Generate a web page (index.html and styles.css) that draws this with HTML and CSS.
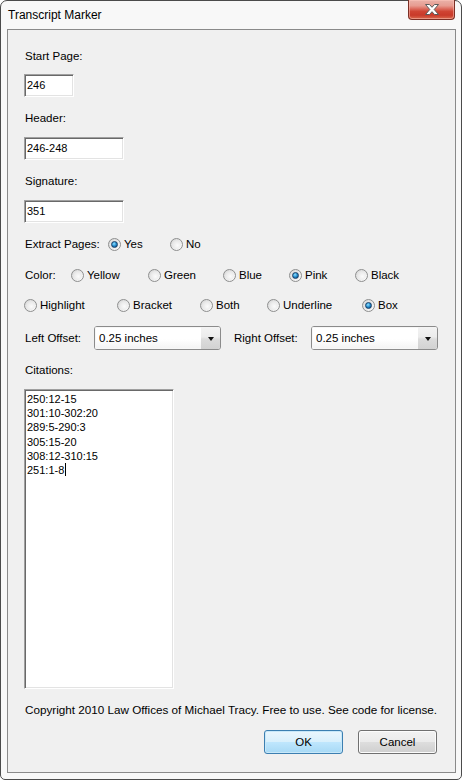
FILE: index.html
```html
<!DOCTYPE html>
<html>
<head>
<meta charset="utf-8">
<link rel="stylesheet" href="styles.css">
</head>
<body>
<div class="window">
  <div class="titlebar">
    <span class="title">Transcript Marker</span>
    <div class="close">
      <svg width="16" height="11" viewBox="0 0 16 11">
        <path d="M1.5 0.5 H5.5 L8 3.3 L10.5 0.5 H14.5 L10.2 5.5 L14.5 10.5 H10.5 L8 7.7 L5.5 10.5 H1.5 L5.8 5.5 Z" fill="#fff" stroke="#5a5a5a" stroke-width="1" stroke-linejoin="round"/>
      </svg>
    </div>
  </div>
  <div class="client">
    <div class="label first">Start Page:</div>
    <div class="tb w50">246</div>
    <div class="label gap13">Header:</div>
    <div class="tb w100">246-248</div>
    <div class="label gap13">Signature:</div>
    <div class="tb w100">351</div>

    <div class="row gap13">
      <span class="rlabel w84">Extract Pages:</span>
      <span class="opt w62"><span class="radio on"></span>Yes</span>
      <span class="opt"><span class="radio"></span>No</span>
    </div>
    <div class="row gap15">
      <span class="rlabel w47">Color:</span>
      <span class="opt w77"><span class="radio"></span>Yellow</span>
      <span class="opt w75"><span class="radio"></span>Green</span>
      <span class="opt w66"><span class="radio"></span>Blue</span>
      <span class="opt w66"><span class="radio on"></span>Pink</span>
      <span class="opt"><span class="radio"></span>Black</span>
    </div>
    <div class="row gap14">
      <span class="opt w93"><span class="radio"></span>Highlight</span>
      <span class="opt w83"><span class="radio"></span>Bracket</span>
      <span class="opt w67"><span class="radio"></span>Both</span>
      <span class="opt w95"><span class="radio"></span>Underline</span>
      <span class="opt"><span class="radio on"></span>Box</span>
    </div>

    <div class="offsets">
      <span class="rlabel w70">Left Offset:</span>
      <div class="select"><span class="sel-text">0.25 inches</span><span class="sel-btn"><span class="tri"></span></span></div>
      <span class="rlabel right-label">Right Offset:</span>
      <div class="select"><span class="sel-text">0.25 inches</span><span class="sel-btn"><span class="tri"></span></span></div>
    </div>

    <div class="label gap12">Citations:</div>
    <div class="textarea">
      <div>250:12-15</div>
      <div>301:10-302:20</div>
      <div>289:5-290:3</div>
      <div>305:15-20</div>
      <div>308:12-310:15</div>
      <div>251:1-8<span class="caret"></span></div>
    </div>

    <div class="label gap13 copyright">Copyright 2010 Law Offices of Michael Tracy. Free to use. See code for license.</div>

    <div class="buttons">
      <div class="btn default">OK</div>
      <div class="btn">Cancel</div>
    </div>
  </div>
</div>
</body>
</html>
```
FILE: styles.css
```css
html, body {
  margin: 0;
  padding: 0;
  background: #ffffff;
}

.window {
  box-sizing: border-box;
  width: 462px;
  height: 780px;
  border: 1px solid #4b4b4b;
  border-radius: 7px 7px 5px 5px;
  background: #f8f8f8;
  padding: 0 5px 6px 6px;
  display: flex;
  flex-direction: column;
  font-family: "Liberation Sans", Arial, sans-serif;
  font-size: 11.5px;
  color: #000;
}

.titlebar {
  height: 28px;
  display: flex;
  align-items: flex-start;
  justify-content: space-between;
}

.title {
  font-size: 12px;
  margin-left: 1px;
  line-height: 28px;
  color: #000;
}

.close {
  box-sizing: border-box;
  width: 47px;
  height: 20px;
  margin-top: -1px;
  margin-right: 1px;
  border: 1px solid #7b2f25;
  border-top: none;
  border-radius: 0 0 4px 4px;
  background: linear-gradient(to bottom, #eab2a9 0%, #e79c91 30%, #dd6f62 45%, #cf4433 60%, #c93a2a 80%, #d96a4e 100%);
  box-shadow: inset 0 0 0 1px rgba(255, 200, 190, 0.5);
  display: flex;
  align-items: center;
  justify-content: center;
}

.client {
  box-sizing: border-box;
  flex: 1;
  border: 1px solid #8a8a8a;
  background: #f0f0f0;
  padding: 0 18px 0 16px;
  display: flex;
  flex-direction: column;
  align-items: flex-start;
}

.label {
  height: 16px;
  line-height: 16px;
  margin-left: 1px;
  white-space: nowrap;
}
.copyright {
  font-size: 11.7px;
}

.first { margin-top: 18px; }
.gap12 { margin-top: 12px; }
.gap13 { margin-top: 13px; }
.gap14 { margin-top: 14px; }
.gap15 { margin-top: 15px; }

.tb {
  box-sizing: border-box;
  height: 23px;
  margin-top: 10px;
  background: #fff;
  border: 1px solid;
  border-color: #a0a0a0 #ffffff #ffffff #a0a0a0;
  box-shadow: inset 1px 1px 0 #696969, inset -1px -1px 0 #e3e3e3;
  padding: 0 2px;
  line-height: 21px;
  font-size: 11px;
}
.w50 { width: 50px; }
.w100 { width: 100px; }

.label.gap13 + .tb { margin-top: 11px; }

.row {
  display: flex;
  align-items: center;
  height: 16px;
}

.rlabel {
  display: inline-block;
  margin-left: 1px;
  white-space: nowrap;
}
.w84 { width: 83px; }
.w47 { width: 46px; }
.w70 { width: 69px; }

.opt {
  display: inline-flex;
  align-items: center;
  white-space: nowrap;
}
.w62 { width: 62px; }
.w77 { width: 77px; }
.w75 { width: 75px; }
.w66 { width: 66px; }
.w93 { width: 93px; }
.w83 { width: 83px; }
.w67 { width: 67px; }
.w95 { width: 95px; }

.radio {
  box-sizing: border-box;
  position: relative;
  width: 13px;
  height: 13px;
  border-radius: 50%;
  border: 1px solid #8e8f8f;
  background: radial-gradient(circle at 65% 65%, #ffffff 0%, #f4f4f4 35%, #dcdcdc 75%, #c8c8c8 100%);
  margin-right: 3px;
  flex: none;
}
.radio::before {
  content: "";
  position: absolute;
  left: 1px;
  top: 1px;
  width: 9px;
  height: 9px;
  border-radius: 50%;
  background: radial-gradient(circle at 60% 60%, #fbfbfb 0%, #e9e9e9 60%, #d2d2d2 100%);
}
.radio.on::after {
  content: "";
  position: absolute;
  left: 2px;
  top: 2px;
  width: 7px;
  height: 7px;
  box-sizing: border-box;
  border-radius: 50%;
  border: 1px solid #1a3f66;
  background: radial-gradient(circle at 40% 35%, #9ae0ff 0%, #3fa6de 35%, #0f68ab 70%, #0b4a80 100%);
}

.offsets {
  display: flex;
  align-items: center;
  height: 24px;
  margin-top: 13px;
}
.right-label {
  margin-left: 13px;
  width: 77px;
}

.select {
  box-sizing: border-box;
  width: 127px;
  height: 24px;
  border: 1px solid #8b8b8b;
  border-radius: 3px;
  background: #fff;
  display: flex;
  overflow: hidden;
}
.sel-text {
  flex: 1;
  padding-left: 3px;
  line-height: 21px;
  background: linear-gradient(to bottom, #ffffff 0%, #ffffff 55%, #f4f4f4 100%);
  border: 1px solid #f7f7f7;
  border-right: none;
}
.sel-btn {
  width: 19px;
  background: linear-gradient(to bottom, #f3f3f3 0%, #ececec 45%, #dcdcdc 55%, #d2d2d2 100%);
  display: flex;
  align-items: center;
  justify-content: center;
}
.tri {
  width: 0;
  height: 0;
  border-left: 3.5px solid transparent;
  border-right: 3.5px solid transparent;
  border-top: 4px solid #111;
  margin-top: 2px;
}

.textarea {
  box-sizing: border-box;
  width: 150px;
  height: 300px;
  margin-top: 11px;
  background: #fff;
  border: 1px solid;
  border-color: #a0a0a0 #ffffff #ffffff #a0a0a0;
  box-shadow: inset 1px 1px 0 #696969, inset -1px -1px 0 #e3e3e3;
  padding: 2px 2px 0 2px;
  line-height: 14.2px;
  font-size: 11px;
}
.caret {
  display: inline-block;
  width: 1px;
  height: 13px;
  background: #000;
  vertical-align: -2px;
  margin-left: 1px;
}

.buttons {
  display: flex;
  gap: 15px;
  margin-top: 12px;
  align-self: flex-end;
}
.btn {
  box-sizing: border-box;
  width: 79px;
  height: 24px;
  border: 1px solid #707070;
  border-radius: 3px;
  background: linear-gradient(to bottom, #f2f2f2 0%, #ebebeb 48%, #dddddd 52%, #cfcfcf 100%);
  box-shadow: inset 0 0 0 1px #fcfcfc;
  display: flex;
  align-items: center;
  justify-content: center;
  font-size: 11.5px;
}
.btn.default {
  border-color: #3c7fb1;
  background: linear-gradient(to bottom, #eaf6fd 0%, #d9f0fc 48%, #bee6fd 52%, #a7d9f5 100%);
  box-shadow: inset 0 0 0 1px #c8e8f9;
}
```
